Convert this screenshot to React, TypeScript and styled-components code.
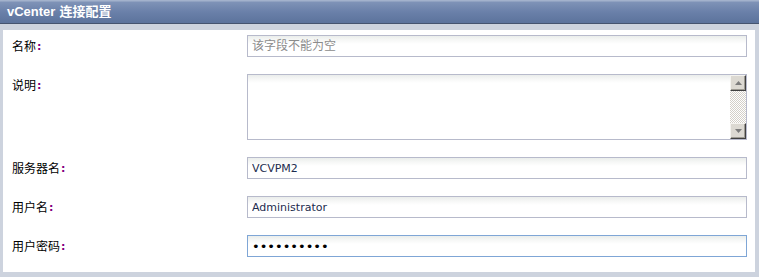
import React, { ReactElement } from "react";
import styled, { createGlobalStyle } from "styled-components";

const Global = createGlobalStyle`
	html, body {
		margin: 0;
		padding: 0;
		background: #ffffff;
	}
	body {
		font-family: "DejaVu Sans", "Noto Sans CJK SC", sans-serif;
		font-size: 12px;
	}
`;

const Panel = styled.div`
	width: 759px;
	height: 277px;
	display: flex;
	flex-direction: column;
	box-sizing: border-box;
`;

const Header = styled.div`
	height: 23px;
	border-bottom: 1px solid #45546f;
	background: linear-gradient(#a3b2cc 0px, #a3b2cc 1px, #7f93b7 2px, #6a80a9 12px, #5c739c 23px);
	color: #ffffff;
	font-family: "Liberation Sans", "Noto Sans CJK SC", sans-serif;
	font-weight: bold;
	font-size: 13px;
	line-height: 23px;
	padding-left: 7px;
	display: flex;
	align-items: center;
	gap: 4px;
`;

const Body = styled.div`
	flex: 1;
	background: #cdd3de;
	padding: 6px 4px 5px 3px;
	display: flex;
`;

const Sheet = styled.div`
	flex: 1;
	background: #ffffff;
	padding: 5px 0 15px 9px;
	display: grid;
	grid-template-columns: 235px 500px;
	grid-auto-rows: min-content;
	row-gap: 17px;
	align-content: start;
	align-items: start;
`;

const Label = styled.div`
	height: 22px;
	display: flex;
	align-items: center;
	font-family: "Noto Sans CJK SC", "DejaVu Sans", sans-serif;
	font-size: 12px;
	line-height: 1;
	color: #000000;
	overflow: hidden;
`;

const Colon = styled.span`
	color: #800080;
	font-family: "DejaVu Sans", sans-serif;
	font-weight: bold;
	font-size: 11px;
	line-height: 1;
	margin-left: 1px;
`;

const Field = styled.input<{ $focused?: boolean }>`
	box-sizing: border-box;
	display: block;
	width: 500px;
	height: 22px;
	margin: 0;
	padding: 0 4px;
	border: 1px solid ${(p) => (p.$focused ? "#7fa6d6" : "#b7bacb")};
	background: linear-gradient(#eaedeb 0px, #f6f7f6 4px, #ffffff 8px);
	font-family: "DejaVu Sans", "Noto Sans CJK SC", sans-serif;
	font-size: 11px;
	color: #1c2c4e;
	outline: none;
	&::placeholder {
		color: #8c8c8c;
		font-family: "Noto Sans CJK SC", sans-serif;
		font-size: 12px;
	}
	&[type="password"] {
		color: #000000;
		font-size: 13px;
		letter-spacing: 0px;
	}
`;

const AreaBox = styled.div`
	position: relative;
	width: 500px;
	height: 66px;
`;

const Area = styled.textarea`
	box-sizing: border-box;
	width: 100%;
	height: 100%;
	margin: 0;
	padding: 3px 20px 3px 4px;
	border: 1px solid #b7bacb;
	background: linear-gradient(#eaedeb 0px, #f6f7f6 4px, #ffffff 8px);
	resize: none;
	outline: none;
	overflow: hidden;
	display: block;
`;

const ScrollBar = styled.div`
	position: absolute;
	top: 1px;
	right: 1px;
	bottom: 1px;
	width: 16px;
	display: flex;
	flex-direction: column;
`;

const Track = styled.div`
	flex: 1;
	background: repeating-conic-gradient(#d4d0c8 0 25%, #ffffff 0 50%) 0 0 / 2px 2px;
`;

const ArrowButton = styled.div`
	box-sizing: border-box;
	height: 16px;
	background: #dcd9d2;
	border-top: 1px solid #f4f3ef;
	border-left: 1px solid #f4f3ef;
	border-right: 1px solid #404040;
	border-bottom: 1px solid #404040;
	box-shadow: inset -1px -1px 0 #9d9a92;
	display: flex;
	align-items: center;
	justify-content: center;
`;

function Arrow({ down }: { down?: boolean }): ReactElement {
	return (
		<svg width="7" height="4" viewBox="0 0 7 4">
			<path d={down ? "M0 0H7L3.5 4Z" : "M0 4H7L3.5 0Z"} fill="#7c7c7c" />
		</svg>
	);
}

function Row({ label, children }: { label: string; children: React.ReactNode }): ReactElement {
	return (
		<>
			<Label>
				{label}
				<Colon>:</Colon>
			</Label>
			{children}
		</>
	);
}

export default function App(): ReactElement {
	return (
		<>
			<Global />
			<Panel>
				<Header>
					<span>vCenter</span>
					<span>连接配置</span>
				</Header>
				<Body>
					<Sheet>
						<Row label="名称">
							<Field placeholder="该字段不能为空" />
						</Row>
						<Row label="说明">
							<AreaBox>
								<Area />
								<ScrollBar>
									<ArrowButton>
										<Arrow />
									</ArrowButton>
									<Track />
									<ArrowButton>
										<Arrow down />
									</ArrowButton>
								</ScrollBar>
							</AreaBox>
						</Row>
						<Row label="服务器名">
							<Field defaultValue="VCVPM2" />
						</Row>
						<Row label="用户名">
							<Field defaultValue="Administrator" />
						</Row>
						<Row label="用户密码">
							<Field type="password" defaultValue="1234567890" $focused />
						</Row>
					</Sheet>
				</Body>
			</Panel>
		</>
	);
}
